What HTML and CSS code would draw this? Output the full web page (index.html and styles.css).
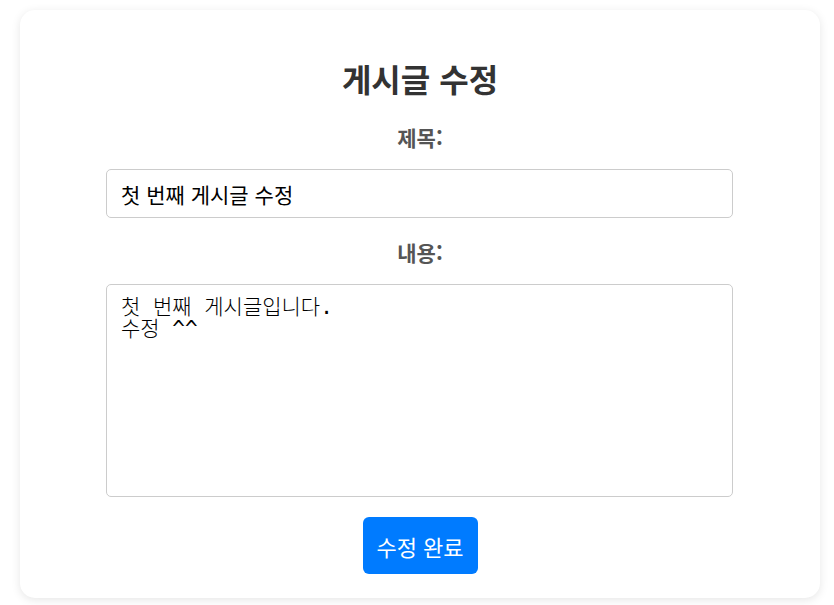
FILE: index.html
```html
<!DOCTYPE html>
<html lang="ko">
<head>
<meta charset="utf-8">
<title>게시글 수정</title>
<link rel="stylesheet" href="styles.css">
</head>
<body>
<div class="card">
  <h2 class="title">게시글 수정</h2>
  <form class="form">
    <label class="label" for="title">제목:</label>
    <input class="input" id="title" type="text" value="첫 번째 게시글 수정">
    <label class="label label-content" for="content">내용:</label>
    <textarea class="textarea" id="content">첫 번째 게시글입니다.
수정 ^^</textarea>
    <button class="button" type="button">수정 완료</button>
  </form>
</div>
</body>
</html>
```
FILE: styles.css
```css
html, body {
  margin: 0;
  padding: 0;
  background: #ffffff;
}
body {
  font-family: "Noto Sans CJK KR", "Noto Sans", sans-serif;
  width: 834px;
  height: 605px;
  overflow: hidden;
}
.card {
  box-sizing: border-box;
  margin: 10px 0 0 20px;
  width: 800px;
  height: 588px;
  background: #fff;
  border-radius: 15px;
  box-shadow: 0 2px 10px rgba(0, 0, 0, 0.1);
  padding-top: 49px;
  display: flex;
  flex-direction: column;
  align-items: center;
}
.title {
  margin: 0;
  font-size: 32px;
  line-height: 38px;
  font-weight: 700;
  color: #333;
}
.form {
  display: flex;
  flex-direction: column;
  align-items: center;
  margin-top: 28px;
}
.label {
  font-size: 21px;
  line-height: 24px;
  font-weight: 700;
  color: #555;
}
.label-content {
  margin-top: 22px;
}
.input {
  box-sizing: border-box;
  margin-top: 20px;
  margin-left: -1px;
  width: 627px;
  height: 49px;
  border: 1px solid #ccc;
  border-radius: 5px;
  padding: 0 14px;
  font-family: "Noto Sans CJK KR", sans-serif;
  font-size: 21px;
  color: #000;
  outline: none;
}
.textarea {
  box-sizing: border-box;
  margin-top: 20px;
  margin-left: -1px;
  width: 627px;
  height: 213px;
  border: 1px solid #ccc;
  border-radius: 5px;
  padding: 11px 14px;
  font-family: "DejaVu Sans Mono", "Noto Sans CJK KR", monospace;
  font-size: 21px;
  line-height: 22px;
  font-weight: 300;
  color: #000;
  resize: none;
  outline: none;
}
.button {
  margin-top: 20px;
  width: 115px;
  height: 57px;
  border: none;
  border-radius: 6px;
  background: #007bff;
  color: #fff;
  font-family: "Noto Sans CJK KR", sans-serif;
  font-size: 22px;
  cursor: pointer;
}
```
